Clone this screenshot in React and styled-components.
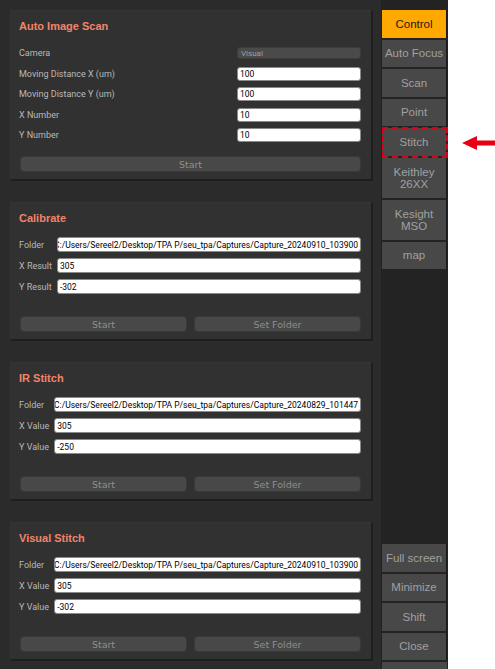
import styled, { createGlobalStyle } from "styled-components";

const GlobalStyle = createGlobalStyle`
  html, body {
    margin: 0;
    padding: 0;
    background: #ffffff;
  }
  * { box-sizing: border-box; }
`;

const autoScanRows = [
  { label: "Camera", value: "Visual", combo: true },
  { label: "Moving Distance X (um)", value: "100" },
  { label: "Moving Distance Y (um)", value: "100" },
  { label: "X Number", value: "10" },
  { label: "Y Number", value: "10" },
];

const folderPanels = [
  {
    title: "Calibrate",
    rows: [
      { label: "Folder", value: "C:/Users/Sereel2/Desktop/TPA P/seu_tpa/Captures/Capture_20240910_103900", end: true },
      { label: "X Result", value: "305" },
      { label: "Y Result", value: "-302" },
    ],
  },
  {
    title: "IR Stitch",
    rows: [
      { label: "Folder", value: "C:/Users/Sereel2/Desktop/TPA P/seu_tpa/Captures/Capture_20240829_101447", end: true },
      { label: "X Value", value: "305" },
      { label: "Y Value", value: "-250" },
    ],
  },
  {
    title: "Visual Stitch",
    rows: [
      { label: "Folder", value: "C:/Users/Sereel2/Desktop/TPA P/seu_tpa/Captures/Capture_20240910_103900", end: true },
      { label: "X Value", value: "305" },
      { label: "Y Value", value: "-302" },
    ],
  },
];

const topNav = [
  { label: "Control", active: true },
  { label: "Auto Focus" },
  { label: "Scan" },
  { label: "Point" },
  { label: "Stitch", marked: true },
  { label: ["Keithley", "26XX"] },
  { label: ["Kesight", "MSO"] },
  { label: "map" },
];

const bottomNav = ["Full screen", "Minimize", "Shift", "Close"];

export default function App() {
  return (
    <>
      <GlobalStyle />
      <Window>
        <Content>
          <Panel>
            <PanelTitle $gap={13}>Auto Image Scan</PanelTitle>
            <Form $cols="1fr 124px" $rowH={14} $gap={6.5}>
              {autoScanRows.map((row) => (
                <FormRow key={row.label}>
                  <Label>{row.label}</Label>
                  {row.combo ? (
                    <Combo>{row.value}</Combo>
                  ) : (
                    <Field>{row.value}</Field>
                  )}
                </FormRow>
              ))}
            </Form>
            <ButtonRow $gap={14}>
              <PanelButton>Start</PanelButton>
            </ButtonRow>
          </Panel>

          {folderPanels.map((panel) => (
            <Panel key={panel.title}>
              <PanelTitle $gap={12}>{panel.title}</PanelTitle>
              <Form $cols="auto 1fr" $rowH={15} $gap={6}>
                {panel.rows.map((row) => (
                  <FormRow key={row.label}>
                    <Label>{row.label}</Label>
                    <Field $end={row.end}>
                      <span>{row.value}</span>
                    </Field>
                  </FormRow>
                ))}
              </Form>
              <ButtonRow $gap={22}>
                <PanelButton>Start</PanelButton>
                <PanelButton>Set Folder</PanelButton>
              </ButtonRow>
            </Panel>
          ))}
        </Content>

        <Sidebar>
          {topNav.map((item, i) => (
            <NavButton key={i} $active={item.active} $tall={Array.isArray(item.label)}>
              {Array.isArray(item.label)
                ? item.label.map((line) => <span key={line}>{line}</span>)
                : item.label}
              {item.marked && (
                <>
                  <DashedMark />
                  <Arrow width="34" height="14" viewBox="0 0 34 14">
                    <polygon points="0,7 15,0 15,4.5 34,4.5 34,9.5 15,9.5 15,14" fill="#e60012" />
                  </Arrow>
                </>
              )}
            </NavButton>
          ))}
          <BottomGroup>
            {bottomNav.map((label) => (
              <NavButton key={label}>{label}</NavButton>
            ))}
            <NavStub />
          </BottomGroup>
        </Sidebar>
      </Window>
    </>
  );
}

const Window = styled.div`
  display: flex;
  width: 448px;
  height: 669px;
  font-family: "Liberation Sans", Arial, sans-serif;
`;

const Content = styled.div`
  width: 381px;
  height: 100%;
  background: #2b2b2b;
  padding: 10px 8px 0 10px;
  display: flex;
  flex-direction: column;
  gap: 21px;
  overflow: hidden;
`;

const Panel = styled.section`
  background: #313131;
  border-top: 1px solid #353535;
  border-left: 1px solid #333333;
  border-right: 2px solid #1e1e1e;
  border-bottom: 2px solid #1e1e1e;
  padding: 8px 8px 7px 8px;
  display: flex;
  flex-direction: column;
`;

const PanelTitle = styled.h2`
  margin: 0 0 ${(p) => p.$gap}px 0;
  height: 14px;
  line-height: 14px;
  font-family: "Liberation Sans", Arial, sans-serif;
  font-size: 11px;
  font-weight: bold;
  color: #f2846a;
`;

const Form = styled.div`
  display: grid;
  grid-template-columns: ${(p) => p.$cols};
  grid-auto-rows: ${(p) => p.$rowH}px;
  row-gap: ${(p) => p.$gap}px;
  column-gap: 5px;
  margin-right: 2px;
`;

const FormRow = styled.div`
  display: contents;
`;

const Label = styled.span`
  display: flex;
  align-items: center;
  font-family: Roboto, sans-serif;
  font-size: 9px;
  color: #b9b9b9;
  white-space: nowrap;
`;

const Field = styled.div`
  display: flex;
  align-items: center;
  justify-content: ${(p) => (p.$end ? "flex-end" : "flex-start")};
  overflow: hidden;
  white-space: nowrap;
  background: #ffffff;
  border: 1px solid #8a8a8a;
  border-radius: 3px;
  padding: 0 2px;
  font-family: Roboto, sans-serif;
  font-size: 8.5px;
  color: #000000;
  span {
    flex-shrink: 0;
  }
`;

const Combo = styled.div`
  display: flex;
  align-items: center;
  margin: 1px 0;
  background: #4a4a4a;
  border: 1px solid #3c3c3c;
  border-radius: 3px;
  padding: 0 3px;
  font-family: Roboto, sans-serif;
  font-size: 8px;
  color: #a0a0a0;
`;

const ButtonRow = styled.div`
  display: flex;
  gap: 7px;
  margin: ${(p) => p.$gap}px 2px 0 1px;
`;

const PanelButton = styled.button`
  flex: 1;
  height: 16px;
  padding: 0;
  background: #484848;
  border: 1px solid #3a3a3a;
  border-radius: 4px;
  font-family: "DejaVu Sans", sans-serif;
  font-size: 9.5px;
  color: #8e8e8e;
`;

const Sidebar = styled.nav`
  width: 67px;
  height: 100%;
  background: #232323;
  padding: 10px 0 0 1px;
  display: flex;
  flex-direction: column;
  gap: 2px;
`;

const NavButton = styled.div`
  position: relative;
  width: 65px;
  height: ${(p) => (p.$tall ? 40 : 27.5)}px;
  flex-shrink: 0;
  display: flex;
  flex-direction: column;
  align-items: center;
  justify-content: center;
  background: ${(p) => (p.$active ? "#ffa800" : "#484848")};
  border-right: 1px solid #1a1a1a;
  font-size: 11.5px;
  line-height: 12px;
  color: ${(p) => (p.$active ? "#1a1a1a" : "#a0a0a0")};
  white-space: nowrap;
`;

const DashedMark = styled.span`
  position: absolute;
  top: -1px;
  left: 0;
  right: -2px;
  bottom: -2.5px;
  border: 2px dashed #d9001b;
`;

const Arrow = styled.svg`
  position: absolute;
  left: 80px;
  top: 8px;
`;

const BottomGroup = styled.div`
  margin-top: auto;
  display: flex;
  flex-direction: column;
  gap: 2px;
`;

const NavStub = styled.div`
  width: 65px;
  height: 7px;
  background: #484848;
`;
